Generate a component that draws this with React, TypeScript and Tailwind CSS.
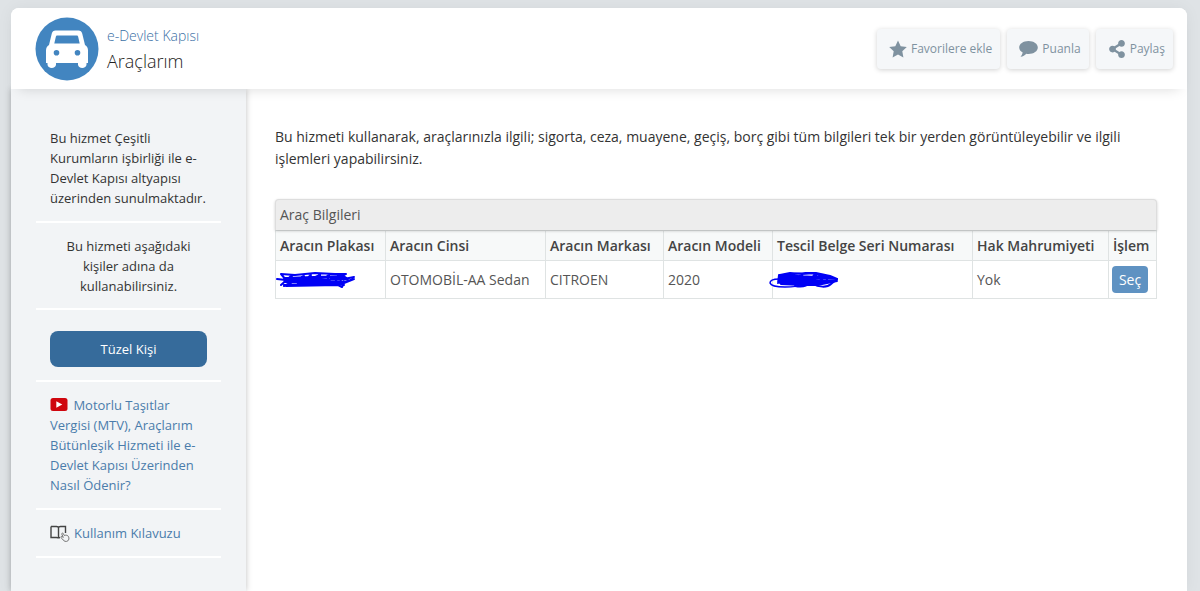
import { type ReactNode } from "react";
import { FaShareAlt } from "react-icons/fa";

const COLUMNS = [
  { label: "Aracın Plakası", width: "w-[110px]" },
  { label: "Aracın Cinsi", width: "w-[160px]" },
  { label: "Aracın Markası", width: "w-[118px]" },
  { label: "Aracın Modeli", width: "w-[109px]" },
  { label: "Tescil Belge Seri Numarası", width: "w-[200px]" },
  { label: "Hak Mahrumiyeti", width: "w-[136px]" },
  { label: "İşlem", width: "w-[48px]" },
] as const;

function CarLogo(): ReactNode {
  return (
    <svg viewBox="0 0 64 64" className="size-16 shrink-0" aria-hidden>
      <circle cx="32" cy="32" r="31.5" fill="#4285c0" />
      <path
        fill="#fff"
        fillRule="evenodd"
        d="M20.500 13.500h23c2 0 3.200 1 3.700 3L50 28c2 1.200 3 2.800 3 5.500V46h-1.500v1.500c0 4.500-8.500 4.500-8.500 0V46H21v1.500c0 4.500-8.500 4.500-8.500 0V46H11V33.500c0-2.700 1-4.300 3-5.500l2.800-11.500c.5-2 1.700-3 3.700-3zm1.800 5c-.8 0-1.200.4-1.400 1.100L19.300 26.500h25.400l-1.600-6.900c-.2-.7-.6-1.100-1.400-1.100zM21.500 33a2.800 2.800 0 1 0 0 5.600 2.800 2.800 0 0 0 0-5.600zm21 0a2.800 2.800 0 1 0 0 5.600 2.800 2.800 0 0 0 0-5.600z"
      />
    </svg>
  );
}

function StarIcon(): ReactNode {
  return (
    <svg viewBox="0 0 18 18" className="size-[18px]" fill="currentColor" aria-hidden>
      <path d="M9 .5l2.700 5.700 6.100.8-4.500 4.300 1.100 6.200L9 14.500l-5.400 3 1.100-6.200L.2 7l6.100-.8z" />
    </svg>
  );
}

function CommentIcon(): ReactNode {
  return (
    <svg viewBox="0 0 19 17" className="h-[17px] w-[19px]" fill="currentColor" aria-hidden>
      <path d="M9.500 1C4.300 1 .2 3.900.2 7.500c0 2.100 1.400 3.900 3.500 5.100-.3 1.500-1 2.800-2.200 4.200 2.500-.2 4.500-1.400 5.800-3 .7.200 1.400.200 2.200.2 5.200 0 9.300-2.900 9.300-6.500S14.700 1 9.500 1z" />
    </svg>
  );
}

function YoutubeIcon(): ReactNode {
  return (
    <svg viewBox="0 0 18 13" className="mr-[2px] inline-block h-[13px] w-[18px] align-[-1px]" aria-hidden>
      <rect x=".5" width="17" height="13" rx="2.500" fill="#cf060e" />
      <path d="M6.300 3.200v6.600l6-3.300z" fill="#fff" />
    </svg>
  );
}

function GuideIcon(): ReactNode {
  return (
    <svg viewBox="0 0 20 18" className="size-5 shrink-0" fill="none" stroke="#444" aria-hidden>
      <path
        d="M8.500 3v10.500M1 2.500h5.500c1.200 0 2 .4 2 1.200 0-.8.8-1.200 2-1.200h5V9M1 2.500v11h5.500c1 0 2 .3 2 1 0-.5.5-.9 1.500-1"
        strokeWidth="1.400"
      />
      <path
        d="M12.500 15l-1.500-1.300c-.7-.8.300-1.700 1.100-1.100l1.200.8-1.500-3.300c-.3-1 1-1.500 1.500-.5l1 1.900c1.700-.6 3.500-.4 4.200 1.200.7 1.500.5 3-.6 4.100-1.600 1.200-4.200.8-5.400-1.800z"
        fill="#f2f4f6"
        stroke="#666"
        strokeWidth=".9"
      />
    </svg>
  );
}

function PlateScribble(): ReactNode {
  return (
    <svg
      viewBox="0 0 82 18"
      className="pointer-events-none absolute top-[10px] left-0 h-[18px] w-[82px]"
      fill="none"
      stroke="#0000f5"
      strokeWidth="2"
      strokeLinejoin="round"
      strokeLinecap="round"
      aria-hidden
    >
      <path d="M1 8l9 1-5-6 14 1 20-2 20 1 11 0-8 3-54 1 60-2-60 4 62-1-62 3 60 0-60 3 54-2 6 2-6-8 10 2-6-4 2 7 10-3-10 4-2 4-4-2-52 1M5 14l10-9 8 8 12-9-6 9 14-9-4 8 14-8-2 7 12-7-4 8M8 15l20-10M24 13l20-9M44 13l18-8M68 8l10-2" />
    </svg>
  );
}

function SerialScribble(): ReactNode {
  return (
    <svg
      viewBox="0 0 74 18"
      className="pointer-events-none absolute top-[10px] -left-1 h-[18px] w-[74px]"
      fill="none"
      stroke="#0000f5"
      strokeWidth="2"
      strokeLinejoin="round"
      strokeLinecap="round"
      aria-hidden
    >
      <path d="M10 8C5 8 1 9 1 12c1 3 8 4 15 4s13 0 14-2" strokeWidth="1.500" />
      <path d="M10 4l-1 8 2-8 10-2 12 1 14-1 14 3 7 3-58-2 58 2-4 3-54-3 50 3-50 0 48 1-46 1 20 1 16 0 20-4-2-3-56-3 30-2 20 3-50 2 54 0-54 3 52 0M11 12l8-9 4 9 10-9 2 9 12-9 0 9 12-7-2 7 9-3" />
      <path d="M26 15c6 1 12 0 14-3M44 13c5 3 14 4 18 0l6-5" />
    </svg>
  );
}

function ActionButton({ icon, children }: { icon: ReactNode; children: ReactNode }): ReactNode {
  return (
    <button
      type="button"
      className="flex h-10 items-center gap-1 rounded bg-[#f5f7f9] pr-2 pl-3 text-[12px] whitespace-nowrap text-[#7f92a0] shadow-[0_1px_5px_rgba(0,0,0,0.18)]"
    >
      {icon}
      {children}
    </button>
  );
}

function Sidebar(): ReactNode {
  return (
    <aside className="w-[235px] shrink-0 bg-[#f2f4f6] px-[25px] pt-[26px] text-[13px] leading-5 shadow-[0_0_6px_rgba(0,0,0,0.25)]">
      <p className="border-b-2 border-white px-[14px] py-[13px] text-[#333]">
        Bu hizmet Çeşitli Kurumların işbirliği ile e-Devlet Kapısı altyapısı üzerinden sunulmaktadır.
      </p>
      <p className="border-b-2 border-white px-[14px] pt-[13px] pb-3 text-center text-[#333]">
        Bu hizmeti aşağıdaki kişiler adına da kullanabilirsiniz.
      </p>
      <div className="border-b-2 border-white px-[14px] pt-[21px] pb-[13px]">
        <button type="button" className="h-9 w-full rounded-lg bg-[#366b9b] text-white">
          Tüzel Kişi
        </button>
      </div>
      <div className="border-b-2 border-white px-[14px] py-[13px]">
        <a href="#video" className="text-[#4a7cab]">
          <YoutubeIcon /> Motorlu Taşıtlar Vergisi (MTV), Araçlarım Bütünleşik Hizmeti ile e-Devlet Kapısı
          Üzerinden Nasıl Ödenir?
        </a>
      </div>
      <div className="border-b-2 border-white px-[14px] py-[13px]">
        <a href="#kilavuz" className="flex items-center gap-1 text-[#4a7cab]">
          <GuideIcon />
          Kullanım Kılavuzu
        </a>
      </div>
    </aside>
  );
}

function VehicleTable(): ReactNode {
  return (
    <table className="mt-[29px] w-full table-fixed border-collapse text-left text-[14px] text-[#555]">
      <caption className="relative h-[31px] rounded-t border border-b-0 border-[#ddd] bg-[#ededed] px-1 text-left leading-[30px] shadow-[0_1px_3px_rgba(0,0,0,0.2)]">
        Araç Bilgileri
      </caption>
      <thead>
        <tr className="h-[30px] bg-[#f7f9f9] text-[#444]">
          {COLUMNS.map((col) => (
            <th key={col.label} scope="col" className={`${col.width} border border-[#dfe3e3] px-1 font-semibold whitespace-nowrap`}>
              {col.label}
            </th>
          ))}
        </tr>
      </thead>
      <tbody>
        <tr className="h-[38px]">
          <td className="relative border border-[#dfe3e3] px-1">
            <PlateScribble />
          </td>
          <td className="border border-[#dfe3e3] px-1 whitespace-nowrap">OTOMOBİL-AA Sedan</td>
          <td className="border border-[#dfe3e3] px-1">CITROEN</td>
          <td className="border border-[#dfe3e3] px-1">2020</td>
          <td className="relative border border-[#dfe3e3] px-1">
            <SerialScribble />
          </td>
          <td className="border border-[#dfe3e3] px-1">Yok</td>
          <td className="border border-[#dfe3e3] px-[3px]">
            <button type="button" className="block h-[27px] w-9 rounded bg-[#5f92c2] text-white">
              Seç
            </button>
          </td>
        </tr>
      </tbody>
    </table>
  );
}

export default function App(): ReactNode {
  return (
    <div lang="tr" className="flex min-h-screen flex-col bg-[#dfe3e6] pt-2 pr-[13px] pl-[11px] font-['Open_Sans',sans-serif]">
      <div className="flex flex-1 flex-col rounded-t-lg bg-white shadow-[0_0_16px_rgba(0,0,0,0.05)]">
        <header className="relative flex h-[81px] items-center justify-between rounded-t-lg bg-white pr-[14px] pl-6 shadow-[0_8px_12px_-8px_rgba(0,0,0,0.15)]">
          <div className="flex items-center gap-2">
            <CarLogo />
            <div>
              <a href="#anasayfa" className="block text-[14px] leading-6 font-light text-[#3a6fa5]">
                e-Devlet Kapısı
              </a>
              <h1 className="text-[18px] leading-[26px] font-light text-[#222]">Araçlarım</h1>
            </div>
          </div>
          <div className="flex gap-[7px]">
            <ActionButton icon={<StarIcon />}>Favorilere ekle</ActionButton>
            <ActionButton icon={<CommentIcon />}>Puanla</ActionButton>
            <ActionButton icon={<FaShareAlt className="size-[18px]" />}>Paylaş</ActionButton>
          </div>
        </header>
        <div className="flex flex-1">
          <Sidebar />
          <main className="min-w-0 flex-1 pt-[37px] pr-[30px] pl-[29px]">
            <p className="text-[14px] leading-[22px] text-[#333]">
              Bu hizmeti kullanarak, araçlarınızla ilgili; sigorta, ceza, muayene, geçiş, borç gibi tüm bilgileri tek
              bir yerden görüntüleyebilir ve ilgili işlemleri yapabilirsiniz.
            </p>
            <VehicleTable />
          </main>
        </div>
      </div>
    </div>
  );
}
